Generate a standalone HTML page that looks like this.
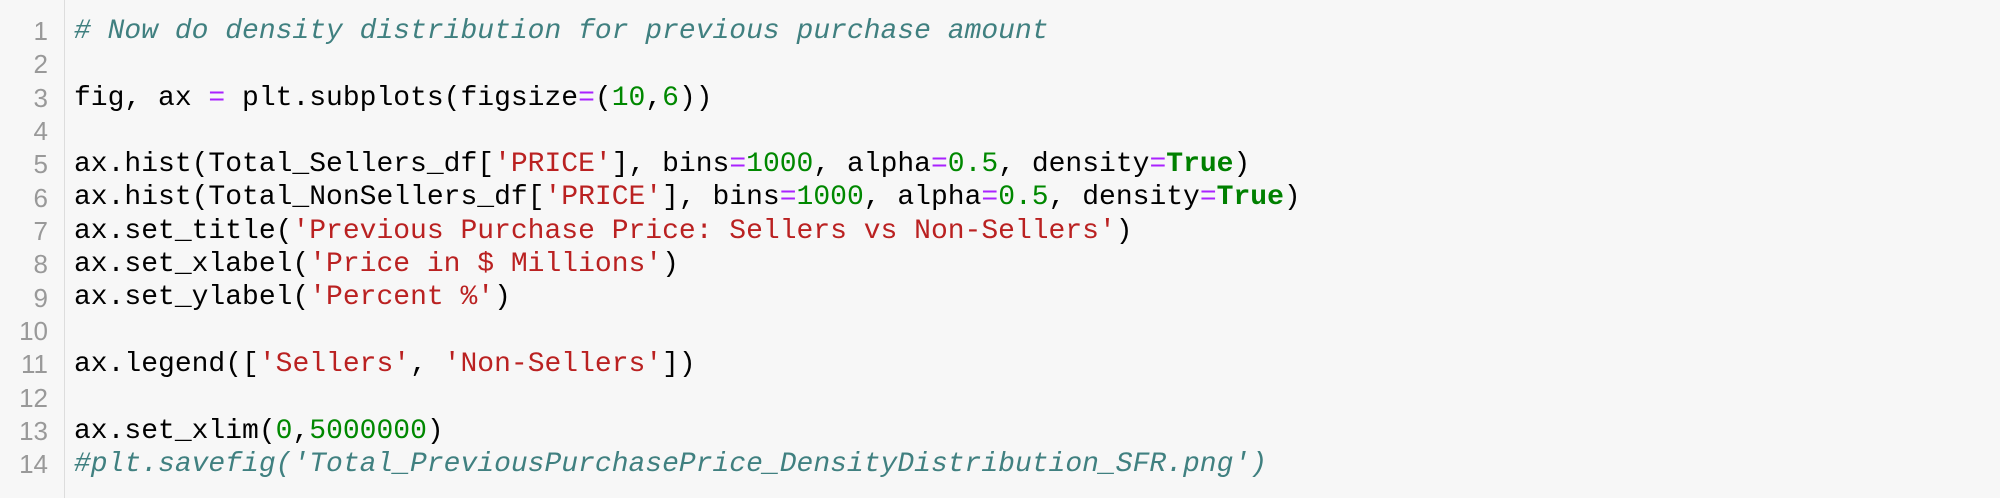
<!DOCTYPE html>
<html><head><meta charset="utf-8"><style>
html,body{margin:0;padding:0;width:2000px;height:498px;background:#f7f7f7;overflow:hidden}
.wrap{position:absolute;left:0;top:0;width:2000px;height:498px;background:#f7f7f7}
.gut{position:absolute;left:0;top:0;width:64px;height:498px;border-right:1px solid #ddd;background:#f7f7f7}
.ln{position:absolute;left:0;width:48px;text-align:right;color:#999;font:26px "Liberation Sans",sans-serif}
.code{position:absolute;left:74px;top:15px;font:28px/33.3px "Liberation Mono",monospace;color:#000;white-space:pre;margin:0}
.c{color:#408080;font-style:italic}.o{color:#aa22ff}.n{color:#008800}.s{color:#ba2121}.k{color:#008000;font-weight:bold}
</style></head><body><div class="wrap">
<div class="gut"></div>
<div class="ln" style="top:16px">1</div><div class="ln" style="top:49px">2</div><div class="ln" style="top:83px">3</div><div class="ln" style="top:116px">4</div><div class="ln" style="top:149px">5</div><div class="ln" style="top:183px">6</div><div class="ln" style="top:216px">7</div><div class="ln" style="top:249px">8</div><div class="ln" style="top:283px">9</div><div class="ln" style="top:316px">10</div><div class="ln" style="top:349px">11</div><div class="ln" style="top:383px">12</div><div class="ln" style="top:416px">13</div><div class="ln" style="top:449px">14</div>
<pre class="code"><span class="c"># Now do density distribution for previous purchase amount</span>

fig, ax <span class="o">=</span> plt.subplots(figsize<span class="o">=</span>(<span class="n">10</span>,<span class="n">6</span>))

ax.hist(Total_Sellers_df[<span class="s">'PRICE'</span>], bins<span class="o">=</span><span class="n">1000</span>, alpha<span class="o">=</span><span class="n">0.5</span>, density<span class="o">=</span><span class="k">True</span>)
ax.hist(Total_NonSellers_df[<span class="s">'PRICE'</span>], bins<span class="o">=</span><span class="n">1000</span>, alpha<span class="o">=</span><span class="n">0.5</span>, density<span class="o">=</span><span class="k">True</span>)
ax.set_title(<span class="s">'Previous Purchase Price: Sellers vs Non-Sellers'</span>)
ax.set_xlabel(<span class="s">'Price in $ Millions'</span>)
ax.set_ylabel(<span class="s">'Percent %'</span>)

ax.legend([<span class="s">'Sellers'</span>, <span class="s">'Non-Sellers'</span>])

ax.set_xlim(<span class="n">0</span>,<span class="n">5000000</span>)
<span class="c">#plt.savefig('Total_PreviousPurchasePrice_DensityDistribution_SFR.png')</span></pre>
</div></body></html>
